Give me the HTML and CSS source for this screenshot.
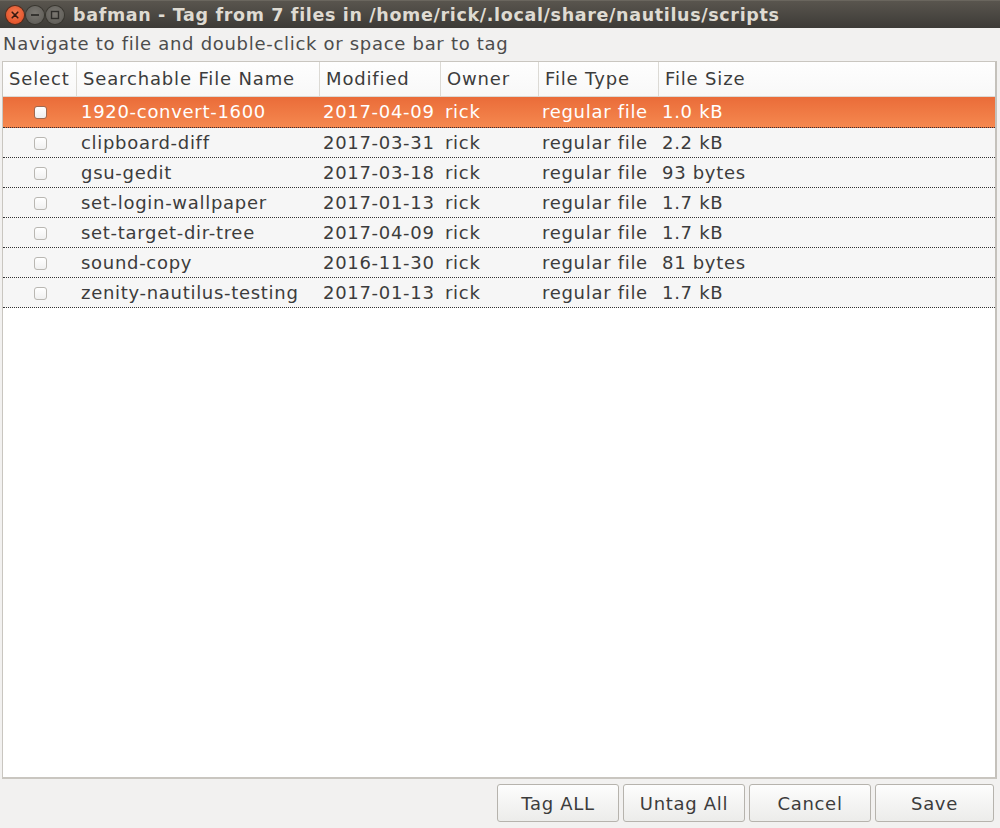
FILE: index.html
```html
<!DOCTYPE html>
<html>
<head>
<meta charset="utf-8">
<link rel="stylesheet" href="styles.css">
</head>
<body>
<div class="window">
  <div class="titlebar">
    <div class="wbtns">
      <span class="wbtn close"><svg viewBox="0 0 18 18" width="18" height="18"><path d="M6.2 6.2 L11.8 11.8 M11.8 6.2 L6.2 11.8" stroke="#3a1a10" stroke-width="1.6" stroke-linecap="round"/></svg></span>
      <span class="wbtn"><svg viewBox="0 0 18 18" width="18" height="18"><path d="M5 9 H13" stroke="#2e2d2a" stroke-width="1.8"/></svg></span>
      <span class="wbtn"><svg viewBox="0 0 18 18" width="18" height="18"><rect x="5.5" y="5.5" width="7" height="7" fill="none" stroke="#2e2d2a" stroke-width="1.4"/></svg></span>
    </div>
    <div class="title">bafman - Tag from 7 files in /home/rick/.local/share/nautilus/scripts</div>
  </div>
  <div class="hint">Navigate to file and double-click or space bar to tag</div>
  <div class="table">
    <div class="thead">
      <div class="th">Select</div>
      <div class="th">Searchable File Name</div>
      <div class="th">Modified</div>
      <div class="th">Owner</div>
      <div class="th">File Type</div>
      <div class="th">File Size</div>
    </div>
    <div class="row selected">
      <div class="cell chk"><span class="box"></span></div>
      <div class="cell">1920-convert-1600</div>
      <div class="cell">2017-04-09</div>
      <div class="cell">rick</div>
      <div class="cell">regular file</div>
      <div class="cell">1.0 kB</div>
    </div>
    <div class="row">
      <div class="cell chk"><span class="box"></span></div>
      <div class="cell">clipboard-diff</div>
      <div class="cell">2017-03-31</div>
      <div class="cell">rick</div>
      <div class="cell">regular file</div>
      <div class="cell">2.2 kB</div>
    </div>
    <div class="row">
      <div class="cell chk"><span class="box"></span></div>
      <div class="cell">gsu-gedit</div>
      <div class="cell">2017-03-18</div>
      <div class="cell">rick</div>
      <div class="cell">regular file</div>
      <div class="cell">93 bytes</div>
    </div>
    <div class="row">
      <div class="cell chk"><span class="box"></span></div>
      <div class="cell">set-login-wallpaper</div>
      <div class="cell">2017-01-13</div>
      <div class="cell">rick</div>
      <div class="cell">regular file</div>
      <div class="cell">1.7 kB</div>
    </div>
    <div class="row">
      <div class="cell chk"><span class="box"></span></div>
      <div class="cell">set-target-dir-tree</div>
      <div class="cell">2017-04-09</div>
      <div class="cell">rick</div>
      <div class="cell">regular file</div>
      <div class="cell">1.7 kB</div>
    </div>
    <div class="row">
      <div class="cell chk"><span class="box"></span></div>
      <div class="cell">sound-copy</div>
      <div class="cell">2016-11-30</div>
      <div class="cell">rick</div>
      <div class="cell">regular file</div>
      <div class="cell">81 bytes</div>
    </div>
    <div class="row">
      <div class="cell chk"><span class="box"></span></div>
      <div class="cell">zenity-nautilus-testing</div>
      <div class="cell">2017-01-13</div>
      <div class="cell">rick</div>
      <div class="cell">regular file</div>
      <div class="cell">1.7 kB</div>
    </div>
  </div>
  <div class="actions">
    <button class="btn">Tag ALL</button>
    <button class="btn">Untag All</button>
    <button class="btn">Cancel</button>
    <button class="btn">Save</button>
  </div>
</div>
</body>
</html>
```

FILE: styles.css
```css
* { box-sizing: border-box; }
html, body { margin: 0; padding: 0; }
body {
  width: 1000px;
  height: 828px;
  overflow: hidden;
  background: #f2f1f0;
  font-family: "DejaVu Sans", "Open Sans", sans-serif;
  color: #3c3c3c;
  letter-spacing: 0.7px;
}
.window {
  display: flex;
  flex-direction: column;
  height: 828px;
}
.titlebar {
  height: 28px;
  flex: none;
  display: flex;
  align-items: center;
  background: linear-gradient(#59554e, #3d3b37);
  border-top: 1px solid #6a665e;
}
.wbtns {
  display: flex;
  gap: 2px;
  padding-left: 6px;
  width: 73px;
}
.wbtn {
  width: 18px;
  height: 18px;
  border-radius: 50%;
  background: radial-gradient(circle at 50% 40%, #7a7771, #5a5853);
  box-shadow: 0 0 0 1px #38362f;
  display: block;
}
.wbtn svg { display: block; }
.wbtn.close {
  background: radial-gradient(circle at 50% 40%, #f37c52, #e0461d);
  box-shadow: 0 0 0 1px #5a2a18;
}
.title {
  font-weight: bold;
  font-size: 17.5px;
  color: #dfdbd2;
  white-space: nowrap;
  letter-spacing: 0.65px;
}
.hint {
  height: 33px;
  flex: none;
  font-size: 18px;
  padding-left: 3px;
  line-height: 31px;
  color: #4c4c4c;
}
.table {
  flex: 1;
  margin: 0 3px 0 2px;
  background: #fff;
  border: 1px solid #c9c6c0;
  border-right: 2px solid #c4c1bb;
  border-bottom: 2px solid #c9c6c0;
}
.thead, .row {
  display: grid;
  grid-template-columns: 73px 243px 121px 98px 120px 1fr;
}
.thead {
  height: 35px;
  background: linear-gradient(#fefefe, #f8f8f8);
  border-bottom: 1px solid #dcdad5;
}
.th {
  font-size: 18px;
  line-height: 34px;
  padding-left: 6px;
  border-left: 1px solid #dcdad5;
  color: #3c3c3c;
  white-space: nowrap;
  letter-spacing: 0.85px;
}
.th:first-child { border-left: none; padding-left: 6px; }
.row {
  height: 30px;
  background: #f6f6f6;
  border-bottom: 1px dotted #333;
}
.row.selected {
  height: 31px;
  background: linear-gradient(#ea6c39, #f5884f);
  color: #fff;
}
.cell {
  font-size: 18px;
  line-height: 30px;
  padding-left: 4px;
  white-space: nowrap;
}
.cell:nth-child(2) { padding-left: 5px; }
.cell:nth-child(4) { padding-left: 5px; }
.chk {
  display: flex;
  align-items: center;
  padding-left: 31px;
}
.box {
  width: 13px;
  height: 13px;
  border: 1px solid #b9b7b2;
  border-radius: 3px;
  background: linear-gradient(#ffffff, #f0f0f0);
}
.selected .box {
  border-color: #9e6a52;
  background: linear-gradient(#ffffff, #eeeeee);
}
.actions {
  height: 49px;
  flex: none;
  display: flex;
  justify-content: flex-end;
  align-items: flex-start;
  gap: 4px;
  padding: 5px 6px 0 0;
}
.btn {
  width: 122px;
  height: 38px;
  font-family: inherit;
  font-size: 18px;
  letter-spacing: 0.7px;
  color: #3c3c3c;
  background: linear-gradient(#fdfdfd, #ececea);
  border: 1px solid #b6b3ad;
  border-radius: 3px;
  padding: 0;
}
.btn:last-child { width: 119px; }
```
